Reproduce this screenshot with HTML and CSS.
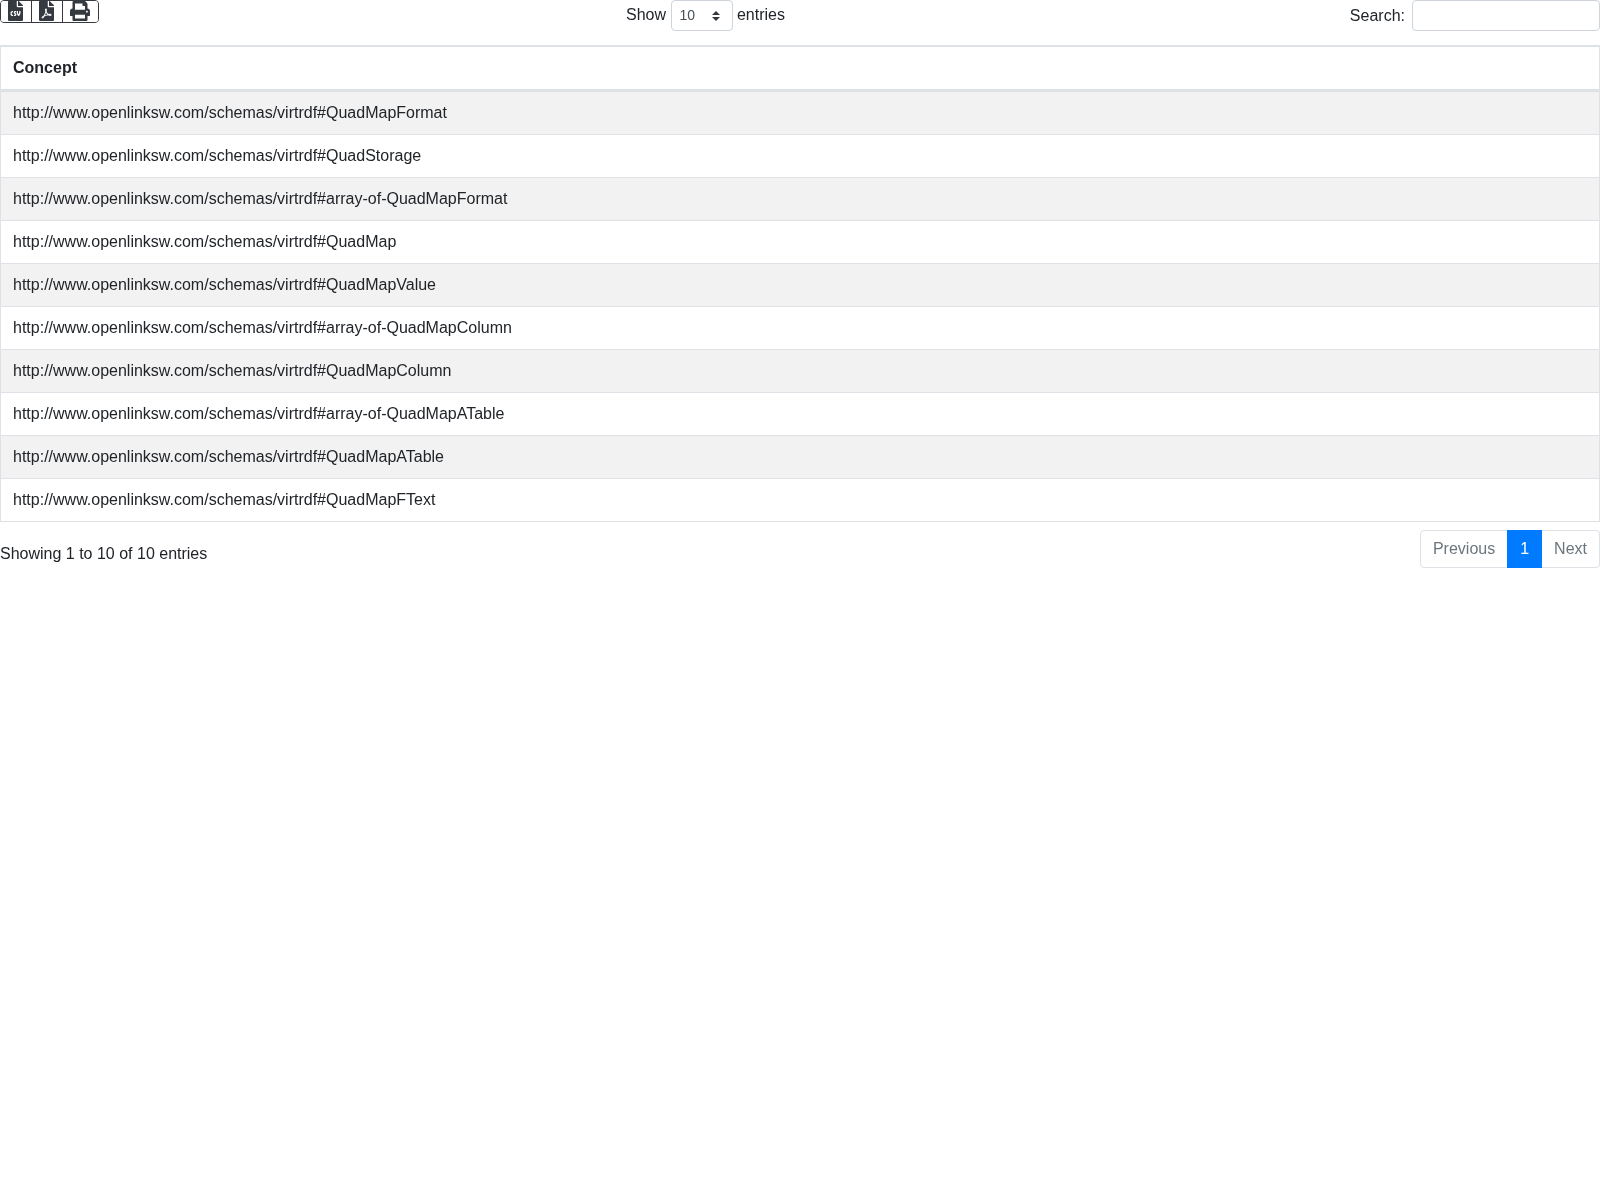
FILE: index.html
```html
<!DOCTYPE html>
<html lang="en">
<head>
<meta charset="utf-8">
<title>Concepts</title>
<link rel="stylesheet" href="styles.css">
</head>
<body>
<div class="toolbar">
  <div class="tool-col">
    <div class="btn-group">
      <button class="tool-btn tool-a" type="button" aria-label="CSV">
        <svg class="icon" viewBox="0 0 384 512"><path d="M224 136V0H24C10.700 0 0 10.700 0 24v464c0 13.300 10.700 24 24 24h336c13.300 0 24-10.700 24-24V160H248c-13.200 0-24-10.800-24-24zm-96 144c0 4.420-3.580 8-8 8h-8c-8.840 0-16 7.160-16 16v32c0 8.840 7.160 16 16 16h8c4.420 0 8 3.580 8 8v16c0 4.420-3.580 8-8 8h-8c-26.510 0-48-21.490-48-48v-32c0-26.510 21.490-48 48-48h8c4.420 0 8 3.580 8 8v16zm44.270 104H160c-4.420 0-8-3.580-8-8v-16c0-4.420 3.580-8 8-8h12.270c5.950 0 10.410-3.500 10.410-6.620 0-1.300-.750-2.660-2.120-3.840l-21.890-18.770c-8.470-7.220-13.330-17.480-13.330-28.140 0-21.300 19.020-38.620 42.410-38.620H200c4.420 0 8 3.580 8 8v16c0 4.420-3.580 8-8 8h-12.270c-5.950 0-10.410 3.500-10.410 6.620 0 1.300.750 2.660 2.120 3.840l21.890 18.770c8.470 7.220 13.330 17.480 13.330 28.140.010 21.290-19 38.620-42.390 38.620zM256 264v20.800c0 20.270 5.700 40.170 16 56.880 10.300-16.700 16-36.610 16-56.880V264c0-4.420 3.580-8 8-8h16c4.420 0 8 3.580 8 8v20.800c0 35.480-12.880 68.890-36.280 94.090-3.020 3.250-7.270 5.110-11.720 5.110s-8.700-1.860-11.720-5.110c-23.400-25.200-36.280-58.610-36.280-94.090V264c0-4.420 3.580-8 8-8h16c4.420 0 8 3.580 8 8zm121-159L279.100 7c-4.500-4.500-10.600-7-17-7H256v128h128v-6.100c0-6.300-2.500-12.400-7-16.900z"/></svg>
      </button>
      <button class="tool-btn tool-b" type="button" aria-label="PDF">
        <svg class="icon" viewBox="0 0 384 512"><path d="M181.900 256.100c-5-16-4.900-46.900-2-46.900 8.400 0 7.600 36.900 2 46.900zm-1.700 47.200c-7.700 20.200-17.300 43.300-28.400 62.700 18.300-7 39-17.200 62.900-21.900-12.700-9.600-24.900-23.400-34.500-40.800zM86.100 428.100c0 .8 13.200-5.400 34.900-40.200-6.700 6.300-29.100 24.500-34.900 40.200zM248 160h136v328c0 13.300-10.700 24-24 24H24c-13.300 0-24-10.700-24-24V24C0 10.700 10.700 0 24 0h200v136c0 13.200 10.800 24 24 24zm-8 171.800c-20-12.200-33.300-29-42.700-53.800 4.500-18.500 11.600-46.600 6.200-64.200-4.700-29.400-42.400-26.500-47.800-6.800-5 18.300-.4 44.100 8.100 77-11.600 27.600-28.700 64.600-40.800 85.800-.1 0-.1.100-.2.100-27.100 13.900-73.600 44.500-54.500 68 5.600 6.900 16 10 21.500 10 17.900 0 35.700-18 61.100-61.800 25.800-8.500 54.100-19.100 79-23.200 21.700 11.800 47.100 19.500 64 19.500 29.200 0 31.200-32 19.700-43.400-13.900-13.600-54.300-9.700-73.600-7.200zM377 105L279 7c-4.500-4.500-10.600-7-17-7h-6v128h128v-6.100c0-6.300-2.500-12.400-7-16.900zm-74.100 255.300c4.100-2.700-2.500-11.900-42.800-9 37.100 15.800 42.800 9 42.800 9z"/></svg>
      </button>
      <button class="tool-btn tool-c" type="button" aria-label="Print">
        <svg class="icon icon-print" viewBox="0 0 512 512"><path d="M448 192V77.250c0-8.490-3.370-16.620-9.370-22.620L393.370 9.370c-6-6-14.140-9.370-22.630-9.370H96C78.330 0 64 14.330 64 32v160c-35.350 0-64 28.650-64 64v112c0 8.840 7.160 16 16 16h48v96c0 17.670 14.330 32 32 32h320c17.670 0 32-14.330 32-32v-96h48c8.840 0 16-7.160 16-16V256c0-35.350-28.650-64-64-64zm-64 256H128v-96h256v96zm0-224H128V64h192v48c0 8.840 7.160 16 16 16h48v96zm48 72c-13.250 0-24-10.750-24-24 0-13.260 10.750-24 24-24s24 10.740 24 24c0 13.250-10.750 24-24 24z"/></svg>
      </button>
    </div>
  </div>
  <div class="length-col">
    <label class="length-label">Show
      <span class="fake-select">10<svg class="sort-arrows" viewBox="0 0 4 5"><path d="M2 0L0 2h4zm0 5L0 3h4z"/></svg></span>
      entries</label>
  </div>
  <div class="search-col">
    <label class="search-label">Search:
      <input class="search-input" type="search">
    </label>
  </div>
</div>

<table class="data-table">
  <thead>
    <tr><th>Concept</th></tr>
  </thead>
  <tbody>
    <tr><td>http://www.openlinksw.com/schemas/virtrdf#QuadMapFormat</td></tr>
    <tr><td>http://www.openlinksw.com/schemas/virtrdf#QuadStorage</td></tr>
    <tr><td>http://www.openlinksw.com/schemas/virtrdf#array-of-QuadMapFormat</td></tr>
    <tr><td>http://www.openlinksw.com/schemas/virtrdf#QuadMap</td></tr>
    <tr><td>http://www.openlinksw.com/schemas/virtrdf#QuadMapValue</td></tr>
    <tr><td>http://www.openlinksw.com/schemas/virtrdf#array-of-QuadMapColumn</td></tr>
    <tr><td>http://www.openlinksw.com/schemas/virtrdf#QuadMapColumn</td></tr>
    <tr><td>http://www.openlinksw.com/schemas/virtrdf#array-of-QuadMapATable</td></tr>
    <tr><td>http://www.openlinksw.com/schemas/virtrdf#QuadMapATable</td></tr>
    <tr><td>http://www.openlinksw.com/schemas/virtrdf#QuadMapFText</td></tr>
  </tbody>
</table>

<div class="footer-row">
  <div class="info">Showing 1 to 10 of 10 entries</div>
  <ul class="pagination">
    <li class="page-item page-prev">Previous</li>
    <li class="page-item page-active">1</li>
    <li class="page-item page-next">Next</li>
  </ul>
</div>
</body>
</html>
```
FILE: styles.css
```css
html, body {
  margin: 0;
  padding: 0;
}
html {
  background: #fff;
}
body {
  font-family: "Liberation Sans", Arial, sans-serif;
  font-size: 16px;
  line-height: 24px;
  color: #212529;
  will-change: transform;
}
.toolbar {
  display: flex;
  height: 45px;
  align-items: flex-start;
}
.tool-col {
  flex: 0 0 25%;
}
.length-col {
  flex: 0 0 38.19%;
  display: flex;
  justify-content: center;
}
.search-col {
  flex: 1 1 0;
  display: flex;
  justify-content: flex-end;
}
.btn-group {
  display: inline-flex;
  height: 23px;
  box-sizing: border-box;
  border: 1px solid #343a40;
  border-radius: 4px;
  overflow: hidden;
}
.tool-btn {
  display: flex;
  align-items: center;
  justify-content: center;
  padding: 0 2px 0 0;
  margin: 0;
  border: 0;
  background: #fff;
  box-sizing: border-box;
}
.tool-a, .tool-b {
  width: 31px;
  border-right: 1px solid #343a40;
}
.tool-c {
  width: 35px;
}
.icon {
  display: block;
  width: 15px;
  height: 20px;
  fill: #343a40;
  margin-top: -1px;
}
.icon-print {
  width: 20px;
}
.length-label {
  display: flex;
  align-items: flex-start;
  line-height: 30px;
  gap: 4.45px;
}
.fake-select {
  width: 62px;
  height: 31px;
  box-sizing: border-box;
  border: 1px solid #ced4da;
  border-radius: 4px;
  padding-left: 8px;
  font-size: 14px;
  line-height: 29px;
  color: #495057;
  display: flex;
  align-items: center;
  justify-content: space-between;
  padding-right: 12px;
}
.sort-arrows {
  width: 8px;
  height: 10px;
  fill: #343a40;
}
.search-label {
  display: flex;
  align-items: flex-start;
  line-height: 31px;
  gap: 7px;
}
.search-input {
  width: 188px;
  height: 31px;
  box-sizing: border-box;
  border: 1px solid #ced4da;
  border-radius: 4px;
  padding: 4px 8px;
  margin: 0;
  background: #fff;
}
.data-table {
  width: 100%;
  border-collapse: collapse;
  border: 1px solid #dee2e6;
}
.data-table th {
  text-align: left;
  font-weight: 700;
  padding: 9px 12px;
  border: 1px solid #dee2e6;
  border-top-width: 2px;
  border-bottom-width: 3px;
}
.data-table td {
  padding: 9px 12px;
  border: 1px solid #dee2e6;
}
.data-table tbody tr:nth-child(odd) {
  background: #f2f2f2;
}
.footer-row {
  display: flex;
  justify-content: space-between;
  align-items: flex-start;
  margin-top: 8px;
}
.info {
  padding-top: 12px;
}
.pagination {
  display: flex;
  list-style: none;
  margin: 0;
  padding: 0;
}
.page-item {
  padding: 6px 12px;
  border: 1px solid #dee2e6;
  color: #6c757d;
  background: #fff;
}
.page-prev {
  border-radius: 4px 0 0 4px;
}
.page-next {
  border-left: 0;
  border-radius: 0 4px 4px 0;
}
.page-active {
  margin-left: -1px;
  background: #007bff;
  border-color: #007bff;
  color: #fff;
}
```
